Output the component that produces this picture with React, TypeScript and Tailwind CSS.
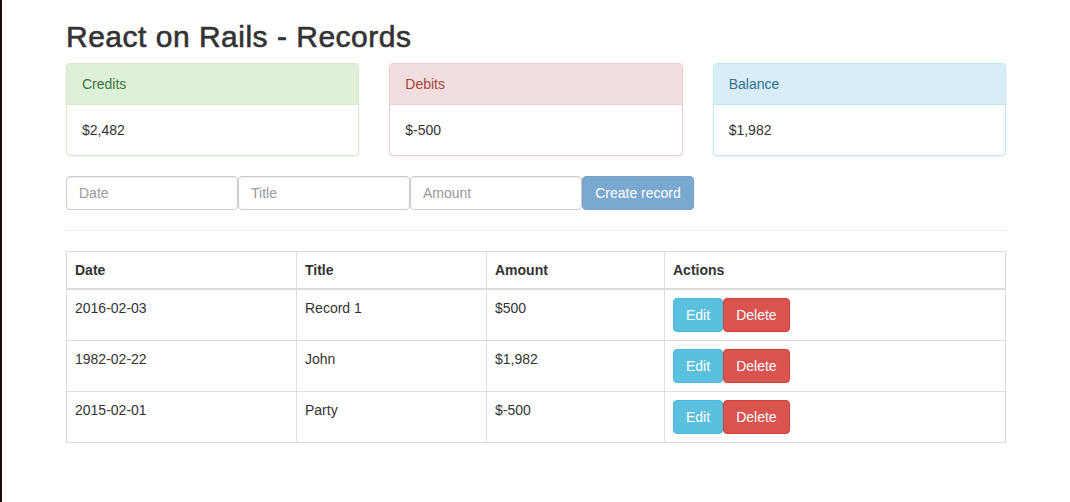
import React from "react";

interface RecordRow {
  date: string;
  title: string;
  amount: string;
}

const records: RecordRow[] = [
  { date: "2016-02-03", title: "Record 1", amount: "$500" },
  { date: "1982-02-22", title: "John", amount: "$1,982" },
  { date: "2015-02-01", title: "Party", amount: "$-500" },
];

function Panel({
  title,
  value,
  tone,
}: {
  title: string;
  value: string;
  tone: "success" | "danger" | "info";
}) {
  const styles = {
    success: {
      box: "border-[#d6e9c6]",
      head: "bg-[#dff0d8] text-[#3c763d] border-[#d6e9c6]",
    },
    danger: {
      box: "border-[#ebccd1]",
      head: "bg-[#f2dede] text-[#a94442] border-[#ebccd1]",
    },
    info: {
      box: "border-[#bce8f1]",
      head: "bg-[#d9edf7] text-[#31708f] border-[#bce8f1]",
    },
  }[tone];

  return (
    <div className={`flex-1 rounded border bg-white shadow-[0_1px_1px_rgba(0,0,0,0.05)] ${styles.box}`}>
      <div className={`rounded-t-[3px] border-b px-[15px] py-[10px] leading-5 ${styles.head}`}>{title}</div>
      <div className="p-[15px] leading-5">{value}</div>
    </div>
  );
}

export default function App() {
  return (
    <div
      className="flex min-h-[502px] bg-white text-[14px] leading-5 text-[#333]"
      style={{ fontFamily: '"Liberation Sans", Arial, sans-serif' }}
    >
      {/* window edge */}
      <div className="w-[2px] shrink-0 bg-[#1c0d0a]" />

      <div className="w-[940px] pl-[64px] box-content">
        <h2 className="mt-5 mb-[10px] text-[30px] font-normal leading-[33px] tracking-[0.5px] [-webkit-text-stroke:0.6px_#333]">
          React on Rails - Records
        </h2>

        <div className="mb-5 flex gap-[30px]">
          <Panel title="Credits" value="$2,482" tone="success" />
          <Panel title="Debits" value="$-500" tone="danger" />
          <Panel title="Balance" value="$1,982" tone="info" />
        </div>

        <form className="flex">
          {["Date", "Title", "Amount"].map((p) => (
            <input
              key={p}
              placeholder={p}
              className="h-[34px] w-[172px] rounded border border-[#ccc] px-3 py-[6px] text-[14px] shadow-[inset_0_1px_1px_rgba(0,0,0,0.075)] outline-none placeholder:text-[#999]"
            />
          ))}
          <button
            type="button"
            disabled
            className="h-[34px] w-[112px] rounded border border-[#2e6da4] bg-[#337ab7] px-3 text-[14px] text-white opacity-65"
          >
            Create record
          </button>
        </form>

        <hr className="my-5 border-t border-[#eee]" />

        <table className="w-full border-collapse border border-[#ddd]">
          <thead>
            <tr>
              <th className="w-[230px] border border-b-2 border-[#ddd] p-2 text-left font-bold">Date</th>
              <th className="w-[190px] border border-b-2 border-[#ddd] p-2 text-left font-bold">Title</th>
              <th className="w-[178px] border border-b-2 border-[#ddd] p-2 text-left font-bold">Amount</th>
              <th className="border border-b-2 border-[#ddd] p-2 text-left font-bold">Actions</th>
            </tr>
          </thead>
          <tbody>
            {records.map((r) => (
              <tr key={r.date}>
                <td className="border border-[#ddd] p-2 align-top">{r.date}</td>
                <td className="border border-[#ddd] p-2 align-top">{r.title}</td>
                <td className="border border-[#ddd] p-2 align-top">{r.amount}</td>
                <td className="border border-[#ddd] p-2 align-top">
                  <div className="flex">
                    <button className="h-[34px] rounded border border-[#46b8da] bg-[#5bc0de] px-3 text-white">Edit</button>
                    <button className="h-[34px] rounded border border-[#d43f3a] bg-[#d9534f] px-3 text-white">Delete</button>
                  </div>
                </td>
              </tr>
            ))}
          </tbody>
        </table>
      </div>
    </div>
  );
}
